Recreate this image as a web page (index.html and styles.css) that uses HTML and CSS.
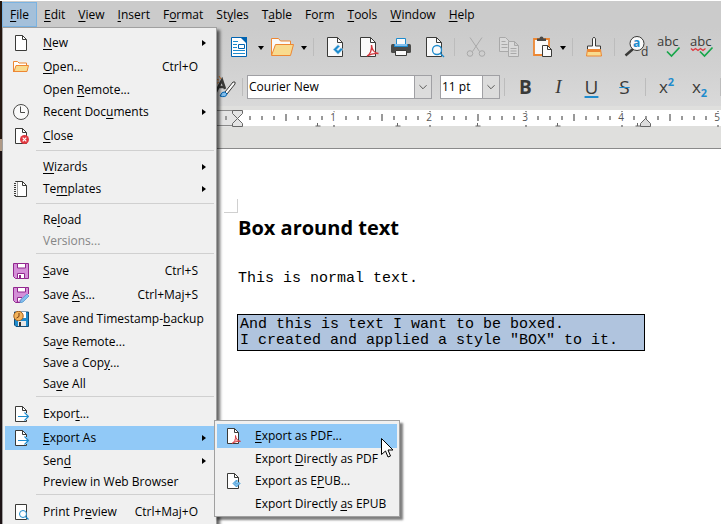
FILE: index.html
```html
<!DOCTYPE html>
<html lang="en">
<head>
    <meta charset="UTF-8">
    <title>Writer</title>
    <link rel="stylesheet" href="styles.css">
</head>
<body>
<svg class="defs" aria-hidden="true">
    <symbol id="i-doc" viewBox="0 0 16 16">
        <path d="M2.500.500h7l4 4v11h-11z" fill="#fff" stroke="#3a3a38"/>
        <path d="M9.500.500v4h4" fill="none" stroke="#3a3a38"/>
    </symbol>
    <symbol id="i-open" viewBox="0 0 16 16">
        <path d="M.5 13V2.500h4l1.500 1.500h7.500v3" fill="#fff" stroke="#ed8733"/>
        <path d="M1 12.500L3 6.500h12.500l-1.500 6z" fill="#f8db8f" stroke="#ed8733"/>
    </symbol>
    <symbol id="i-clock" viewBox="0 0 16 16">
        <circle cx="8" cy="8" r="7.500" fill="#fafafa" stroke="#4a4a48"/>
        <path d="M7.500 2.500v6h4.500" fill="none" stroke="#4a4a48"/>
    </symbol>
    <symbol id="i-close" viewBox="0 0 16 16">
        <use href="#i-doc"/>
        <circle cx="11.500" cy="11.500" r="4.500" fill="#e0373e"/>
        <path d="M9.700 9.700l3.600 3.600m0-3.600l-3.600 3.600" stroke="#fff" stroke-width="1.200"/>
    </symbol>
    <symbol id="i-template" viewBox="0 0 16 16">
        <path d="M2.500.500h7l4 4v11h-11z" fill="#fff" stroke="#3a3a38"/>
        <path d="M9.500.500v4h4" fill="none" stroke="#3a3a38"/>
        <path d="M2.500 1v14" stroke="#f0f0f0" stroke-width="2"/>
        <path d="M1 2.500h2m-2 2h2m-2 2h2m-2 2h2m-2 2h2m-2 2h2m-2 2h2" stroke="#3a3a38" fill="none"/>
        <path d="M4.500 1v14" stroke="#a0a0a0"/>
    </symbol>
    <symbol id="i-save" viewBox="0 0 16 16">
        <path d="M.5.500h15v15H2.500l-2-2z" fill="#d48fd8" stroke="#92278f"/>
        <path d="M4.500.500h8v4.500h-8zM4.500 10.500h7v5h-7z" fill="#fff" stroke="#92278f"/>
        <path d="M6 12h2v3.500H6z" fill="#92278f"/>
    </symbol>
    <symbol id="i-saveas" viewBox="0 0 16 16">
        <path d="M15.500 7V.500H.5v13l2 2H7" fill="#d48fd8" stroke="#92278f"/>
        <path d="M4.500.500h8v4.500h-8zM4.500 15v-4.500H9" fill="#fff" stroke="#92278f"/>
        <path d="M7 16l1-3.500L14 7l2 2-6 6z" fill="#83beec" stroke="#4a8fca" stroke-width=".7"/>
    </symbol>
    <symbol id="i-stamp" viewBox="0 0 16 16">
        <path d="M1.500 1h14v14.500H3L1.500 14z" fill="#1e8bcd" stroke="#144e78"/>
        <path d="M5 10h8v5H5z" fill="#e8e8e8"/>
        <path d="M6 11h2v4H6z" fill="#333"/>
        <path d="M9 1h4v6H9z" fill="#fff"/>
        <circle cx="5.500" cy="5" r="4.700" fill="#f2b35c" stroke="#a5601c"/>
        <path d="M6 2v3.500L3.500 7" fill="none" stroke="#7a3c10"/>
    </symbol>
    <symbol id="i-export" viewBox="0 0 16 16">
        <path d="M13.500 7V4.500l-4-4h-7v15h11V14" fill="#fff" stroke="#3a3a38"/>
        <path d="M9.500.500v4h4" fill="none" stroke="#3a3a38"/>
        <path d="M5 10.500h10.500m-4-4l4 4-4 4" fill="none" stroke="#1e8bcd" stroke-width="1.200"/>
    </symbol>
    <symbol id="i-preview" viewBox="0 0 16 16">
        <path d="M2.500.500h11v15h-11z" fill="#fff" stroke="#3a3a38"/>
        <circle cx="10" cy="10" r="3.500" fill="#fff" stroke="#1e8bcd"/>
        <path d="M12.500 12.500l3 3" stroke="#1e8bcd" stroke-width="1.200"/>
    </symbol>
    <symbol id="i-pdf" viewBox="0 0 16 16">
        <use href="#i-doc"/>
        <path d="M7 15.500c2-1 4-4 3.500-8 .3 3.500 2.500 5.500 5 5.800-3-.2-6 .5-8.500 2.200z" fill="#f7b3b6" stroke="#d1353b" stroke-width=".9"/>
    </symbol>
    <symbol id="i-epub" viewBox="0 0 16 16">
        <use href="#i-doc"/>
        <path d="M11.500 7L8 10.500l3.500 3.500 3.500-3.500-1.500-1.500-2 2-1-1 2-2z" fill="#83beec" stroke="#1e8bcd" stroke-width=".8"/>
    </symbol>
</svg>

<div class="app">
    <nav class="menubar">
        <button class="open"><u>F</u>ile</button>
        <button><u>E</u>dit</button>
        <button><u>V</u>iew</button>
        <button><u>I</u>nsert</button>
        <button>F<u>o</u>rmat</button>
        <button>St<u>y</u>les</button>
        <button>T<u>a</u>ble</button>
        <button>Fo<u>r</u>m</button>
        <button><u>T</u>ools</button>
        <button><u>W</u>indow</button>
        <button><u>H</u>elp</button>
    </nav>

    <div class="toolbar">
        <button class="tool" aria-label="Templates">
            <svg viewBox="0 0 24 24"><path d="M3.500 2.500h10l5 5v14h-15z" fill="#fff" stroke="#0063b1"/><path d="M12 2h7v7z" fill="#0063b1"/><path d="M5 9.500h4M5 12.500h4m-4 3h12m-12 3h12M5 6.500h5" stroke="#1e8bcd"/><path d="M10.500 9.500h6v4h-6z" fill="#fff" stroke="#0063b1"/></svg>
        </button>
        <button class="drop" aria-label="Templates list"></button>
        <button class="tool" aria-label="Open">
            <svg viewBox="0 0 24 24"><path d="M.5 20V3.500h7l2 2.500h10v4" fill="#fafafa" stroke="#ed8733"/><path d="M.5 20.500L4.500 9.500h18l-3 11z" fill="#f8db8f" stroke="#ed8733"/></svg>
        </button>
        <button class="drop" aria-label="Open list"></button>
        <span class="sep"></span>
        <button class="tool" aria-label="Export as EPUB">
            <svg viewBox="0 0 24 24"><path d="M4.500 2.500h10l5 5v14h-15z" fill="#fafafa" stroke="#3a3a38"/><path d="M14.500 2.500v5h5" fill="none" stroke="#3a3a38"/><path d="M15 9.500L10 14.500l5 5 5-5-2-2-3 3-1-1 3-3z" fill="#1e8bcd" stroke="#fafafa" stroke-width=".7"/></svg>
        </button>
        <button class="tool" aria-label="Export as PDF">
            <svg viewBox="0 0 24 24"><path d="M4.500 2.500h10l5 5v14h-15z" fill="#fafafa" stroke="#3a3a38"/><path d="M14.500 2.500v5h5" fill="none" stroke="#3a3a38"/><path d="M11 21c3-1 5-6 4.500-11 .5 5 3 8 7 8.500-4-.5-8 .5-11.500 2.500z" fill="#fafafa" stroke="#d1353b" stroke-width="1.300"/></svg>
        </button>
        <button class="tool" aria-label="Print">
            <svg viewBox="0 0 24 24"><path d="M7.500 10V3.500h9V10" fill="#fafafa" stroke="#1e8bcd"/><rect x="2" y="9" width="20" height="9" rx="1.500" fill="#4a4a48"/><path d="M5.500 9v2.500h13V9" fill="#83beec" stroke="#1e8bcd"/><path d="M6.500 15.500h11v5h-11z" fill="#fafafa" stroke="#3a3a38"/></svg>
        </button>
        <button class="tool" aria-label="Print Preview">
            <svg viewBox="0 0 24 24"><path d="M4.500 2.500h10l5 5v14h-15z" fill="#fafafa" stroke="#3a3a38"/><path d="M14.500 2.500v5h5" fill="none" stroke="#3a3a38"/><circle cx="15" cy="15" r="4.500" fill="#fafafa" stroke="#1e8bcd" stroke-width="1.300"/><path d="M18 18l4 4" stroke="#1e8bcd" stroke-width="1.500"/></svg>
        </button>
        <span class="sep"></span>
        <button class="tool" aria-label="Cut">
            <svg viewBox="0 0 24 24" fill="none" stroke="#a9a9a9"><path d="M6 2.500l9.500 14M18 2.500l-9.500 14"/><circle cx="6" cy="18.500" r="2.800"/><circle cx="18" cy="18.500" r="2.800"/></svg>
        </button>
        <button class="tool" aria-label="Copy">
            <svg viewBox="0 0 24 24" fill="#d9d9d9" stroke="#a9a9a9"><path d="M2.500 2.500h6l4 4v10h-10zM4.500 6.500h4m-4 3h6m-6 3h6"/><path d="M11.500 6.500h6l4 4v11h-10zM17.500 6.500v4h4m-8 3h6m-6 2.500h6m-6 2.500h6"/></svg>
        </button>
        <button class="tool" aria-label="Paste">
            <svg viewBox="0 0 24 24"><path d="M4 4h15v16H4z" fill="#fafafa" stroke="#ed8733" stroke-width="1.800"/><path d="M7 6V3.500h2.500a2 2 0 0 1 4 0H16V6z" fill="#4a4a48"/><path d="M12.500 10.500h5l4 4v7h-9z" fill="#fafafa" stroke="#3a3a38"/><path d="M17.500 10.500v4h4" fill="none" stroke="#3a3a38"/></svg>
        </button>
        <button class="drop" aria-label="Paste list"></button>
        <span class="sep"></span>
        <button class="tool" aria-label="Clone formatting">
            <svg viewBox="0 0 24 24"><path d="M10.500 11V3.500q1.500-2.500 3 0V11h5v3.500h-13V11z" fill="#fafafa" stroke="#3a3a38"/><path d="M5.500 14.500h13l1 6.500h-15z" fill="#f8db8f" stroke="#ed8733"/><path d="M5.500 15h13v2h-13z" fill="#ed8733"/></svg>
        </button>
        <span class="sep"></span>
        <button class="tool" aria-label="Find and replace">
            <svg viewBox="0 0 24 24"><path d="M1.500 20.500L9 14" stroke="#3a3a38" stroke-width="2.500"/><circle cx="13" cy="8.500" r="7" fill="#fafafa" stroke="#3a3a38"/><text x="9" y="12" class="tx blue" font-size="12" font-weight="700">a</text><text x="17" y="21" class="tx" font-size="12">d</text></svg>
        </button>
        <button class="tool" aria-label="Spelling">
            <svg viewBox="0 0 24 24"><text x="0" y="11" class="tx" font-size="13">abc</text><path d="M10 16.500l4.500 4.500 8-8.500" fill="none" stroke="#18a64a" stroke-width="1.700"/></svg>
        </button>
        <button class="tool" aria-label="Auto spellcheck">
            <svg viewBox="0 0 24 24"><text x="0" y="11" class="tx" font-size="13">abc</text><path d="M1 13.500l2 2 2.500-2 2.500 2 2.500-2 2.500 2 2.500-2" fill="none" stroke="#e0373e" stroke-width="1.300"/><path d="M10 16.500l4.500 4.500 8-8.500" fill="none" stroke="#18a64a" stroke-width="1.700"/></svg>
        </button>
    </div>

    <div class="toolbar format">
        <button class="tool" aria-label="Update style">
            <svg viewBox="0 0 24 24"><path d="M6 17L12 5l3 9M9 12h5" fill="none" stroke="#3a3a38" stroke-width="2.500"/><path d="M9 1l2 3M5 4l4 1M6 9l3-2" stroke="#ed8733"/><path d="M15 17l8-10q3-1 2 2l-8 10z" fill="#fafafa" stroke="#3a3a38"/><path d="M10 21q2-5 5-4l2 2q-1 4-7 2z" fill="#83beec" stroke="#0063b1"/></svg>
        </button>
        <span class="sep"></span>
        <div class="combo font">
            <select aria-label="Font name"><option>Courier New</option></select>
            <svg class="chev" viewBox="0 0 18 22"><path d="M5 9l4 4 4-4" fill="none" stroke="#4a4a48"/></svg>
        </div>
        <div class="combo size">
            <select aria-label="Font size"><option>11 pt</option></select>
            <svg class="chev" viewBox="0 0 18 22"><path d="M5 9l4 4 4-4" fill="none" stroke="#4a4a48"/></svg>
        </div>
        <span class="sep"></span>
        <button class="tool bold">B</button>
        <button class="tool italic">I</button>
        <button class="tool under"><span>U</span></button>
        <button class="tool strike"><span>S</span></button>
        <span class="sep"></span>
        <button class="tool script">x<sup>2</sup></button>
        <button class="tool script">x<sub>2</sub></button>
        <span class="sep"></span>
    </div>

    <div class="ruler">
        <svg width="100%" height="18">
            <defs>
                <pattern id="ticks" x="237" y="0" width="96" height="18" patternUnits="userSpaceOnUse">
                    <path d="M12 6h2v4h-2zM24 6h2v4h-2zM36 6h2v4h-2zM48 4h2v7h-2zM60 6h2v4h-2zM72 6h2v4h-2zM84 6h2v4h-2zM0 1h2v2H0zM0 15h2v2H0z" fill="#999"/>
                </pattern>
            </defs>
            <rect x="0" y="0" width="237" height="17" fill="#e4e4e4"/>
            <path d="M0 .5h237M0 15.500h237" stroke="#8a8a8a"/>
            <rect x="237" y="0" width="100%" height="16" fill="#fff"/>
            <rect x="220" y="0" width="100%" height="17" fill="url(#ticks)"/>
            <path d="M317.500 13v3m-2 0h5M397.500 13v3m-2 0h5M477.500 13v3m-2 0h5M557.500 13v3m-2 0h5M637.500 13v3m-2 0h5" stroke="#666"/>
            <g class="nums">
                <text x="333" y="11">1</text>
                <text x="429" y="11">2</text>
                <text x="525" y="11">3</text>
                <text x="621" y="11">4</text>
                <text x="717" y="11">5</text>
            </g>
            <path d="M232.500 .5h10v3l-5 5 5 5v3h-10v-3l5-5-5-5z" fill="#e4e4e4" stroke="#666"/>
            <path d="M640.500 16.500v-3l5-5 5 5v3z" fill="#dcdcdc" stroke="#666"/>
        </svg>
    </div>

    <main class="page">
        <div class="crop"></div>
        <h1>Box around text</h1>
        <p>This is normal text.</p>
        <p class="box">And this is text I want to be boxed.<br>I created and applied a style "BOX" to it.</p>
    </main>

    <div class="edge"></div>

    <div class="menu file">
        <button class="item tall"><svg><use href="#i-doc"/></svg><span><u>N</u>ew</span><i class="more"></i></button>
        <button class="item tall"><svg><use href="#i-open"/></svg><span><u>O</u>pen...</span><kbd>Ctrl+O</kbd></button>
        <button class="item"><span>Open <u>R</u>emote...</span></button>
        <button class="item tall"><svg><use href="#i-clock"/></svg><span>Recent Doc<u>u</u>ments</span><i class="more"></i></button>
        <button class="item tall"><svg><use href="#i-close"/></svg><span><u>C</u>lose</span></button>
        <hr>
        <button class="item"><span><u>W</u>izards</span><i class="more"></i></button>
        <button class="item tall"><svg><use href="#i-template"/></svg><span>Te<u>m</u>plates</span><i class="more"></i></button>
        <hr>
        <button class="item"><span>Re<u>l</u>oad</span></button>
        <button class="item" disabled><span>Versions...</span></button>
        <hr>
        <button class="item tall"><svg><use href="#i-save"/></svg><span><u>S</u>ave</span><kbd>Ctrl+S</kbd></button>
        <button class="item tall"><svg><use href="#i-saveas"/></svg><span>Save <u>A</u>s...</span><kbd>Ctrl+Maj+S</kbd></button>
        <button class="item tall"><svg><use href="#i-stamp"/></svg><span>Save and Timestamp-<u>b</u>ackup</span></button>
        <button class="item"><span>Sa<u>v</u>e Remote...</span></button>
        <button class="item"><span>Save a Cop<u>y</u>...</span></button>
        <button class="item"><span>Sa<u>v</u>e All</span></button>
        <hr>
        <button class="item tall"><svg><use href="#i-export"/></svg><span>Expor<u>t</u>...</span></button>
        <div class="parent">
            <button class="item tall active"><svg><use href="#i-export"/></svg><span><u>E</u>xport As</span><i class="more"></i></button>
            <div class="menu sub">
                <button class="item tall active"><svg><use href="#i-pdf"/></svg><span><u>E</u>xport as PDF...</span></button>
                <button class="item"><span>Export <u>D</u>irectly as PDF</span></button>
                <button class="item tall"><svg><use href="#i-epub"/></svg><span>Export as E<u>P</u>UB...</span></button>
                <button class="item"><span>Export Directly <u>a</u>s EPUB</span></button>
                <svg class="cursor" viewBox="0 0 12 20"><path d="M.5.500v16l4-3.500 2.500 6 2.500-1-2.500-6h5z" fill="#fff" stroke="#000"/></svg>
            </div>
        </div>
        <button class="item"><span>Sen<u>d</u></span><i class="more"></i></button>
        <button class="item"><span>Preview in Web Browser</span></button>
        <hr>
        <button class="item tall"><svg><use href="#i-preview"/></svg><span>Print Pr<u>e</u>view</span><kbd>Ctrl+Maj+O</kbd></button>
    </div>
</div>
</body>
</html>
```
FILE: styles.css
```css
* {
    box-sizing: border-box;
}

body {
    margin: 0;
    font-family: "Open Sans", "Noto Sans", sans-serif;
    font-size: 12px;
    line-height: 16px;
    color: #000;
}

button {
    margin: 0;
    padding: 0;
    border: 0;
    background: none;
    font: inherit;
    color: inherit;
}

u {
    text-underline-offset: 2px;
}

.defs {
    display: none;
}

.app {
    position: relative;
    display: flex;
    flex-direction: column;
    height: 100vh;
    overflow: hidden;
    border-top: 1px solid #fff;
    background: #dfdfdd;
}

.menubar {
    display: flex;
    height: 26px;
    padding: 1px 0 0 2px;
    background: #cbcbcb;
}

.menubar button {
    padding: 0 5px 0 6px;
    border: 1px solid transparent;
}

.menubar .open {
    padding: 0 7px;
    background: #a4c0da;
    border-color: #7ab3e2;
}

/* toolbars */
.toolbar {
    display: flex;
    align-items: center;
    height: 40px;
    padding-left: 223px;
    background: linear-gradient(#cbcbcb, #d1d1d1);
}

.toolbar.format {
    height: 39px;
    padding-left: 205px;
    background: linear-gradient(#d1d1d1, #d9d9d9);
}

.tool {
    flex: none;
    width: 33px;
    height: 28px;
    color: #3a3a38;
}

.tool svg {
    display: block;
    width: 24px;
    height: 24px;
    margin: 0 auto;
    overflow: visible;
}

.tx {
    fill: #3a3a38;
}

.tx.blue {
    fill: #1e8bcd;
}

.drop {
    flex: none;
    width: 10px;
    height: 28px;
}

.drop::before {
    content: "";
    display: block;
    width: 0;
    margin: 2px auto 0;
    border: 3px solid transparent;
    border-top: 4px solid #000;
    border-bottom: 0;
}

.sep {
    flex: none;
    width: 1px;
    height: 18px;
    margin: 0 4px;
    background: #bcbcbc;
}

.combo {
    display: grid;
    flex: none;
    grid-template-columns: 1fr 18px;
    height: 24px;
}

.combo.font {
    width: 185px;
    margin-right: 8px;
}

.combo.size {
    width: 60px;
}

.combo select {
    grid-area: 1 / 1 / 2 / 3;
    appearance: none;
    border: 1px solid #a0a0a4;
    border-radius: 0;
    padding: 0 1px;
    background: #fff;
    font: inherit;
    color: inherit;
}

.chev {
    grid-area: 1 / 2;
    width: 18px;
    height: 24px;
    border: 1px solid #a0a0a4;
    background: #dcdcdc;
    pointer-events: none;
}

.bold,
.italic,
.under,
.strike {
    font-size: 19px;
    line-height: 24px;
}

.bold {
    font-weight: bold;
}

.italic {
    font-family: "Liberation Serif", serif;
    font-style: italic;
}

.under span {
    text-decoration: underline 2px #1e8bcd;
    text-underline-offset: 2px;
}

.strike span {
    text-decoration: line-through 1px #1e8bcd;
}

.script {
    font-size: 17px;
}

.script sup,
.script sub {
    font-size: 11px;
    font-weight: bold;
    line-height: 0;
    color: #1e8bcd;
}

/* ruler */
.ruler {
    height: 43px;
    padding-top: 4px;
    border-bottom: 1px solid #8a8a8a;
}

.ruler svg {
    display: block;
}

.nums text {
    font-size: 10px;
    text-anchor: middle;
    fill: #555;
    stroke: #fff;
    stroke-width: 2px;
    paint-order: stroke;
}

/* document */
.page {
    flex: 1;
    padding: 50px 76px 0 224px;
    background: #fff;
}

.crop {
    width: 14px;
    height: 14px;
    border: solid #d0d0d0;
    border-width: 0 1px 1px 0;
}

.page h1 {
    margin: 0 14px;
    font-size: 20px;
    line-height: 30px;
}

.page p {
    margin: 28px 14px 0;
    font: 15px/16px "Liberation Mono", monospace;
}

.page .box {
    margin: 27px 0 0 13px;
    padding: 2px 2px 1px;
    border: 1px solid #000;
    background: #b0c4de;
}

/* strip of the desktop seen left of the window */
.edge {
    position: absolute;
    top: 0;
    left: 0;
    width: 2px;
    height: 100%;
    background: linear-gradient(#24160f 0 138px, #b09a86 138px 150px, #1d1416 150px);
}

/* menus */
.menu {
    position: absolute;
    padding: 3px 2px;
    border: 1px solid #a0a0a0;
    background: #f0f0f0;
}

.menu.file {
    top: 26px;
    left: 2px;
    width: 215px;
    box-shadow: 3px 3px 3px rgba(0, 0, 0, .6);
}

.item {
    display: flex;
    align-items: center;
    width: 100%;
    height: 21px;
    padding-left: 8px;
    text-align: left;
    white-space: nowrap;
}

.item.tall {
    height: 24px;
}

.item.active {
    background: #91c9f7;
}

.item:disabled {
    color: #858585;
}

.item svg {
    flex: none;
    width: 16px;
    height: 16px;
    margin-right: 14px;
}

.item span:first-child {
    margin-left: 30px;
}

.item kbd {
    margin: 0 16px 0 auto;
    font: inherit;
}

.more {
    margin: 0 8px 0 auto;
    border: 3px solid transparent;
    border-left: 4px solid #000;
    border-right: 0;
}

.menu hr {
    height: 1px;
    margin: 2px 0 5px 31px;
    border: 0;
    background: #d0d0d0;
}

.parent {
    position: relative;
}

.menu.sub {
    top: -6px;
    left: 209px;
    width: 186px;
    padding: 2px;
    padding-top: 3px;
    box-shadow: 3px 3px 2px rgba(0, 0, 0, .5);
}

.cursor {
    position: absolute;
    top: 17px;
    left: 166px;
    width: 12px;
    height: 20px;
}
```
